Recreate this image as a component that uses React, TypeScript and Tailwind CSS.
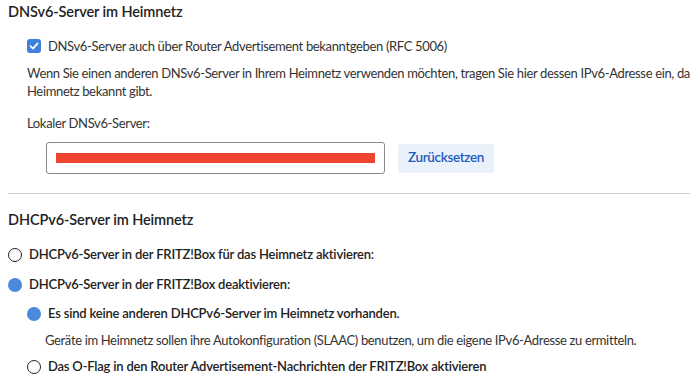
import React from "react";

const font = { fontFamily: "Lato, 'Open Sans', sans-serif" };

function Radio({ checked }: { checked?: boolean }) {
  return checked ? (
    <span className="w-[14px] h-[14px] rounded-full bg-[#4a89dc] shrink-0" />
  ) : (
    <span className="w-[14px] h-[14px] rounded-full border-[1.5px] border-[#222] bg-white shrink-0" />
  );
}

export default function App() {
  return (
    <div
      className="w-[690px] h-[381px] overflow-hidden bg-white text-[#333] text-[13px] tracking-[-0.35px]"
      style={font}
    >
      {/* DNSv6 */}
      <h2 className="pl-2 pt-[3px] text-[14.5px] leading-[18px] font-semibold text-[#222] tracking-[-0.1px]">
        DNSv6-Server im Heimnetz
      </h2>
      <div className="pl-[27px] mt-[16px] flex items-center gap-[7px] h-[18px]">
        <span className="w-[14px] h-[14px] rounded-[3px] bg-[#3f80d9] flex items-center justify-center shrink-0">
          <svg width="10" height="10" viewBox="0 0 10 10" fill="none">
            <path d="M1.5 5.2 L4 7.6 L8.6 2.4" stroke="white" strokeWidth="1.7" strokeLinecap="round" strokeLinejoin="round" />
          </svg>
        </span>
        <span className="leading-[18px] whitespace-nowrap">
          DNSv6-Server auch über Router Advertisement bekanntgeben (RFC 5006)
        </span>
      </div>
      <p className="pl-[27px] mt-[9px] leading-[18px] whitespace-nowrap">
        Wenn Sie einen anderen DNSv6-Server in Ihrem Heimnetz verwenden möchten, tragen Sie hier dessen IPv6-Adresse ein, damit die FRITZ!Box ihn im
        <br />
        Heimnetz bekannt gibt.
      </p>
      <p className="pl-[27px] mt-[14px] leading-[18px]">Lokaler DNSv6-Server:</p>
      <div className="pl-[46px] mt-[10px] flex items-center gap-[13px]">
        <div className="w-[339px] h-[32px] border border-[#8a8a8a] rounded-[3px] flex items-center px-[9px]">
          <div className="w-[320px] h-[10px] bg-[#ee4430]" />
        </div>
        <button className="h-[29px] px-[10px] rounded-[3px] bg-[#e9f1fb] text-[#1f5bbf] font-semibold text-[13.5px] leading-none">
          Zurücksetzen
        </button>
      </div>

      <div className="ml-2 mt-[19px] border-t border-[#cfcfcf]" />

      {/* DHCPv6 */}
      <h2 className="pl-2 mt-[17px] text-[14.5px] leading-[18px] font-semibold text-[#222] tracking-[-0.1px]">
        DHCPv6-Server im Heimnetz
      </h2>
      <div className="pl-2 mt-[17px] flex items-center gap-[7px] h-[18px] font-semibold text-[#222] tracking-[-0.2px]">
        <Radio />
        <span>DHCPv6-Server in der FRITZ!Box für das Heimnetz aktivieren:</span>
      </div>
      <div className="pl-2 mt-[12px] flex items-center gap-[7px] h-[18px] font-semibold text-[#222] tracking-[-0.2px]">
        <Radio checked />
        <span>DHCPv6-Server in der FRITZ!Box deaktivieren:</span>
      </div>
      <div className="pl-[27px] mt-[11px] flex items-center gap-[7px] h-[18px] font-semibold text-[#222] tracking-[-0.2px]">
        <Radio checked />
        <span>Es sind keine anderen DHCPv6-Server im Heimnetz vorhanden.</span>
      </div>
      <p className="pl-[45px] mt-[8px] leading-[18px] whitespace-nowrap">
        Geräte im Heimnetz sollen ihre Autokonfiguration (SLAAC) benutzen, um die eigene IPv6-Adresse zu ermitteln.
      </p>
      <div className="pl-[27px] mt-[9px] flex items-center gap-[7px] h-[18px] font-semibold text-[#222] tracking-[-0.2px]">
        <Radio />
        <span>Das O-Flag in den Router Advertisement-Nachrichten der FRITZ!Box aktivieren</span>
      </div>
    </div>
  );
}
